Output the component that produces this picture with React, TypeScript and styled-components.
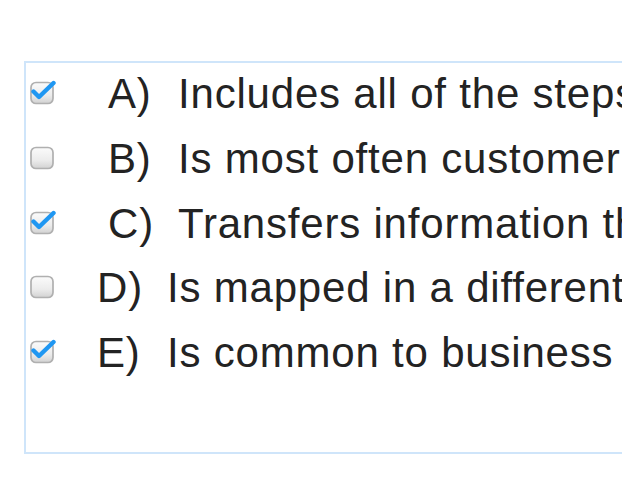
import React from "react";
import styled, { createGlobalStyle } from "styled-components";

const Global = createGlobalStyle`
  html, body {
    margin: 0;
    padding: 0;
    background: #ffffff;
    overflow: hidden;
  }
  body {
    font-family: "Liberation Sans", Arial, sans-serif;
  }
`;

const Page = styled.div`
  width: 622px;
  height: 496px;
  padding: 61px 0 0 24px;
  box-sizing: border-box;
  overflow: hidden;
`;

const Panel = styled.div`
  width: 760px;
  height: 393px;
  box-sizing: border-box;
  border: 2px solid #cfe5fa;
  border-right: none;
`;

const List = styled.ul`
  list-style: none;
  margin: 0;
  padding: 0;
`;

const Row = styled.li`
  display: flex;
  align-items: flex-start;
  height: 64.75px;
  white-space: nowrap;
`;

const Box = styled.span`
  display: block;
  width: 28px;
  height: 28px;
  margin: 15px 0 0 2px;
  flex: none;
`;

const Letter = styled.span<{ $indent: number }>`
  margin-left: ${(p) => p.$indent}px;
  width: 70px;
  flex: none;
  font-size: 42px;
  line-height: 62px;
  letter-spacing: 0.8px;
  color: #232323;
`;

const Text = styled.span`
  font-size: 42px;
  line-height: 62px;
  letter-spacing: 0.8px;
  color: #232323;
`;

const CheckBox: React.FC<{ checked: boolean; id: string }> = ({ checked, id }) => (
  <Box>
    <svg width="28" height="28" viewBox="0 0 28 28">
      <defs>
        <linearGradient id={`g-${id}`} x1="0" y1="0" x2="0" y2="1">
          <stop offset="0" stopColor="#fbfbfb" />
          <stop offset="0.6" stopColor="#ececec" />
          <stop offset="1" stopColor="#d2d2d2" />
        </linearGradient>
      </defs>
      <rect
        x="3"
        y="4.5"
        width="22"
        height="21"
        rx="5"
        fill={`url(#g-${id})`}
        stroke="#b0b0b0"
        strokeWidth="1.7"
      />
      {checked && (
        <path
          d="M5.5 13.5 L11 19 L25.5 5"
          fill="none"
          stroke="#1f97f2"
          strokeWidth="4.4"
          strokeLinecap="round"
          strokeLinejoin="round"
        />
      )}
    </svg>
  </Box>
);

const options = [
  { id: "a", letter: "A)", text: "Includes all of the steps", checked: true, indent: 52 },
  { id: "b", letter: "B)", text: "Is most often customer", checked: false, indent: 52 },
  { id: "c", letter: "C)", text: "Transfers information th", checked: true, indent: 52 },
  { id: "d", letter: "D)", text: "Is mapped in a different", checked: false, indent: 41 },
  { id: "e", letter: "E)", text: "Is common to business", checked: true, indent: 41 },
];

export default function App() {
  return (
    <>
      <Global />
      <Page>
        <Panel>
          <List>
            {options.map((o) => (
              <Row key={o.id}>
                <CheckBox checked={o.checked} id={o.id} />
                <Letter $indent={o.indent}>{o.letter}</Letter>
                <Text>{o.text}</Text>
              </Row>
            ))}
          </List>
        </Panel>
      </Page>
    </>
  );
}
